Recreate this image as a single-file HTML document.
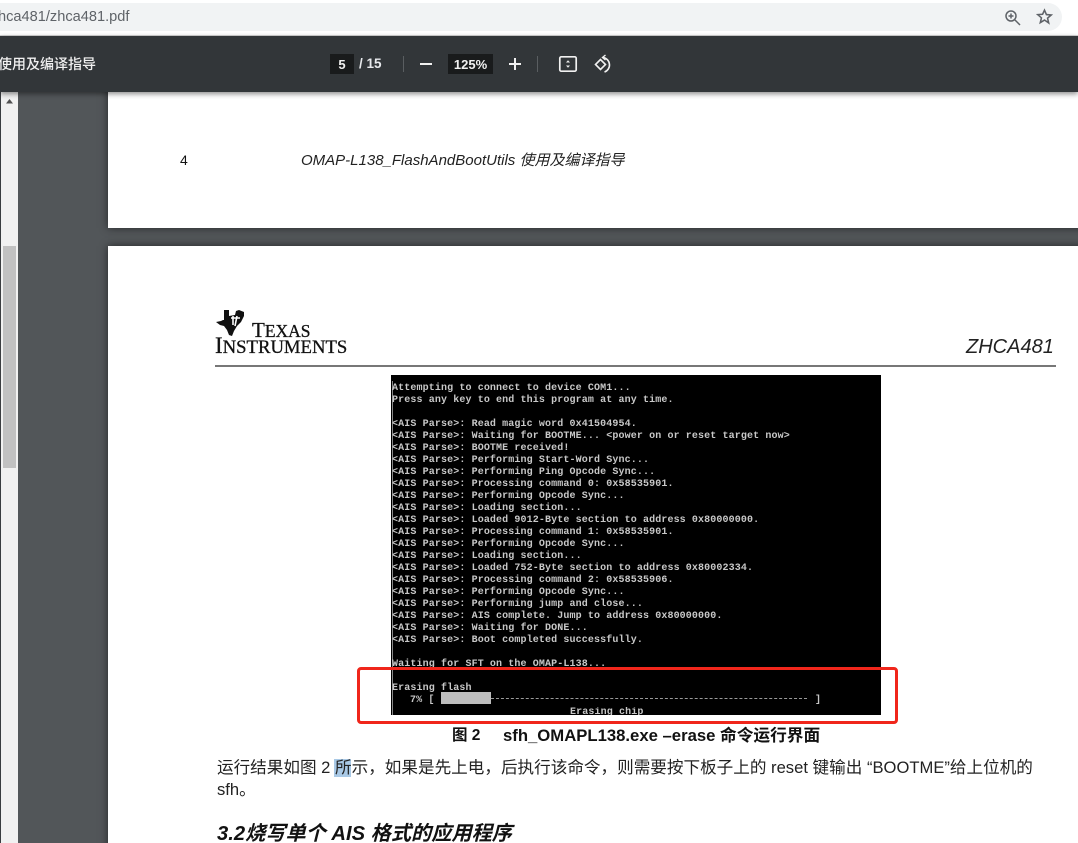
<!DOCTYPE html>
<html><head><meta charset="utf-8">
<style>
html,body{margin:0;padding:0;background:#fff}
#r{position:relative;width:1078px;height:843px;overflow:hidden;background:#525659;font-family:"Liberation Sans","Noto Sans CJK SC",sans-serif}
#r div,#r svg{position:absolute}
.t{white-space:pre;line-height:16px}
.l{left:392px;color:#c8c8c8;font:bold 10px/12px "Liberation Mono",monospace;letter-spacing:.12px;white-space:pre;height:12px}
</style></head><body><div id="r">
<div style="left:0;top:0;width:1078px;height:36px;background:#fff"></div>
<div style="left:0;top:35px;width:1078px;height:1px;background:#d5d5d5"></div>
<div style="left:-20px;top:3px;width:1082px;height:28px;background:#f1f3f4;border-radius:14px"></div>
<div class="t" style="left:-2px;top:9px;font-size:14.600px;color:#5f6368;width:200px;overflow:hidden">hca481/zhca481.pdf</div>
<svg style="left:1003px;top:8px" width="18" height="18" viewBox="0 0 18 18" fill="none" stroke="#5f6368" stroke-width="1.5"><circle cx="8" cy="8" r="5"/><path d="M12 12l5 5M8 5.500v5M5.500 8h5"/></svg>
<svg style="left:1036px;top:8px" width="17" height="17" viewBox="0 0 24 24" fill="none" stroke="#5f6368" stroke-width="2.2"><path d="M12 3l2.700 6.300 6.800.6-5.200 4.500 1.600 6.700L12 17l-5.900 3.600 1.600-6.700-5.200-4.500 6.800-.6z"/></svg>

<div style="left:0;top:36px;width:1078px;height:56px;background:#323639;box-shadow:0 2px 5px rgba(0,0,0,.45);z-index:5"></div>
<div style="z-index:6;left:0;top:36px;width:1078px;height:56px">
<div class="t" style="left:-2px;top:20px;color:#f1f1f1;font-size:14px;font-weight:500">使用及编译指导</div>
<div style="left:330px;top:18px;width:24px;height:20px;background:#191b1c"></div>
<div class="t" style="left:330px;top:21px;width:24px;text-align:center;color:#f1f1f1;font-size:13px;font-weight:bold">5</div>
<div class="t" style="left:359px;top:20px;color:#e8eaed;font-size:13.500px;font-weight:bold">/ 15</div>
<div style="left:403px;top:20px;width:1px;height:16px;background:#5a5e61"></div>
<div style="left:420px;top:27px;width:12px;height:2px;background:#f1f1f1"></div>
<div style="left:448px;top:18px;width:45px;height:20px;background:#191b1c"></div>
<div class="t" style="left:448px;top:21px;width:45px;text-align:center;color:#f1f1f1;font-size:13px;font-weight:bold">125%</div>
<div style="left:509px;top:27px;width:12px;height:2px;background:#f1f1f1"></div>
<div style="left:514px;top:22px;width:2px;height:12px;background:#f1f1f1"></div>
<div style="left:537px;top:20px;width:1px;height:16px;background:#5a5e61"></div>
<svg style="left:558px;top:19px" width="20" height="18" viewBox="0 0 20 18" fill="none"><rect x="1.800" y="1.800" width="16.400" height="14.400" rx="1.500" stroke="#f1f1f1" stroke-width="1.700"/><path d="M8 7.500l2-2.200 2 2.200zM8 10.500l2 2.200 2-2.200z" fill="#f1f1f1"/></svg>
<svg style="left:594px;top:18px" width="20" height="20" viewBox="0 0 20 20" fill="none" stroke="#f1f1f1" stroke-width="1.600"><path d="M6.500 5.500L1.500 10.500l5 5 5-5z"/><path d="M9 3.500A7.500 7.500 0 0 1 10.500 18"/><path d="M11.500 1L8.500 3.500l3 2.500" stroke-width="1.400"/></svg>
</div>

<div style="left:0;top:92px;width:1px;height:751px;background:#3a3d40"></div>
<div style="left:1px;top:92px;width:17px;height:751px;background:#f1f1f1"></div>
<svg style="left:6px;top:99px" width="7" height="5"><path d="M3.500 0L7 4.500H0z" fill="#505050"/></svg>
<div style="left:3px;top:246px;width:13px;height:222px;background:#c1c1c1"></div>

<div style="left:108px;top:70px;width:980px;height:158px;background:#fff;box-shadow:0 0 8px rgba(0,0,0,.55)"></div>
<div style="left:108px;top:246px;width:980px;height:620px;background:#fff;box-shadow:0 0 8px rgba(0,0,0,.55)"></div>

<div class="t" style="left:180px;top:152px;font-size:14px;color:#111">4</div>
<div class="t" style="left:301px;top:153px;font-size:15px;font-style:italic;color:#222">OMAP-L138_FlashAndBootUtils 使用及编译指导</div>

<svg style="left:216px;top:309px" width="30" height="28" viewBox="0 0 30 28"><path d="M8 1h5v6l6-1 1-4 3-1 5 2v4l-3 6-4 4-3 5-2 5-3-1-2-5-3-4-4-1-4-3 5-1 2-1h1z" fill="#111"/><path d="M17 7v9M21 7l-2 10M15 9h9" stroke="#fff" stroke-width="1.600" fill="none"/></svg>
<div class="t" style="left:252px;top:320px;font:21px/20px 'Liberation Serif',serif;color:#111;-webkit-text-stroke:.3px #111">T<span style="font-size:17.500px">EXAS</span></div>
<div class="t" style="left:215px;top:335px;font:23px/22px 'Liberation Serif',serif;color:#111;-webkit-text-stroke:.3px #111">I<span style="font-size:18.700px">NSTRUMENTS</span></div>
<div class="t" style="left:966px;top:335px;font:italic 20px/24px 'Liberation Sans',sans-serif;color:#222">ZHCA481</div>
<div style="left:215px;top:365px;width:841px;height:2px;background:#777"></div>

<div style="left:391px;top:375px;width:490px;height:340px;background:#000"></div>
<div style="left:392px;top:381px;width:1px;height:334px;background:#888"></div>
<div style="left:0;top:2px;width:1078px;height:843px">
<div class="l" style="top:381px">Attempting to connect to device COM1...</div>
<div class="l" style="top:393px">Press any key to end this program at any time.</div>
<div class="l" style="top:417px">&lt;AIS Parse&gt;: Read magic word 0x41504954.</div>
<div class="l" style="top:429px">&lt;AIS Parse&gt;: Waiting for BOOTME... &lt;power on or reset target now&gt;</div>
<div class="l" style="top:441px">&lt;AIS Parse&gt;: BOOTME received!</div>
<div class="l" style="top:453px">&lt;AIS Parse&gt;: Performing Start-Word Sync...</div>
<div class="l" style="top:465px">&lt;AIS Parse&gt;: Performing Ping Opcode Sync...</div>
<div class="l" style="top:477px">&lt;AIS Parse&gt;: Processing command 0: 0x58535901.</div>
<div class="l" style="top:489px">&lt;AIS Parse&gt;: Performing Opcode Sync...</div>
<div class="l" style="top:501px">&lt;AIS Parse&gt;: Loading section...</div>
<div class="l" style="top:513px">&lt;AIS Parse&gt;: Loaded 9012-Byte section to address 0x80000000.</div>
<div class="l" style="top:525px">&lt;AIS Parse&gt;: Processing command 1: 0x58535901.</div>
<div class="l" style="top:537px">&lt;AIS Parse&gt;: Performing Opcode Sync...</div>
<div class="l" style="top:549px">&lt;AIS Parse&gt;: Loading section...</div>
<div class="l" style="top:561px">&lt;AIS Parse&gt;: Loaded 752-Byte section to address 0x80002334.</div>
<div class="l" style="top:573px">&lt;AIS Parse&gt;: Processing command 2: 0x58535906.</div>
<div class="l" style="top:585px">&lt;AIS Parse&gt;: Performing Opcode Sync...</div>
<div class="l" style="top:597px">&lt;AIS Parse&gt;: Performing jump and close...</div>
<div class="l" style="top:609px">&lt;AIS Parse&gt;: AIS complete. Jump to address 0x80000000.</div>
<div class="l" style="top:621px">&lt;AIS Parse&gt;: Waiting for DONE...</div>
<div class="l" style="top:633px">&lt;AIS Parse&gt;: Boot completed successfully.</div>
<div class="l" style="top:657px">Waiting for SFT on the OMAP-L138...</div>
<div class="l" style="top:681px">Erasing flash</div>
<div class="l" style="top:693px;left:410px">7% [</div>
<div class="l" style="top:693px;left:815px">]</div>
<div class="l" style="top:705px;left:570px;height:8px;overflow:hidden">Erasing chip</div>
</div>
<div style="left:441px;top:692px;width:50px;height:12px;background:#bdbdbd"></div>
<div style="left:491px;top:698px;width:316px;border-top:1px dashed #999"></div>

<div style="left:357px;top:667px;width:535px;height:51px;border:3px solid #f0261b;border-radius:4px"></div>

<div class="t" style="left:452px;top:728px;font-size:15.500px;font-weight:bold;color:#111">图 2</div>
<div class="t" style="left:503px;top:728px;font-size:16.700px;font-weight:bold;color:#111">sfh_OMAPL138.exe –erase 命令运行界面</div>

<div style="left:334px;top:759px;width:17px;height:18px;background:#a9c9e6"></div>
<div class="t" style="left:217px;top:760px;font-size:16.600px;color:#222">运行结果如图 2 所示，如果是先上电，后执行该命令，则需要按下板子上的 reset 键输出 “BOOTME”给上位机的</div>
<div class="t" style="left:217px;top:782px;font-size:16.600px;color:#222">sfh。</div>
<div class="t" style="left:217px;top:823px;font-size:20.200px;line-height:22px;font-weight:bold;font-style:italic;color:#111">3.2烧写单个 AIS 格式的应用程序</div>
</div></body></html>
